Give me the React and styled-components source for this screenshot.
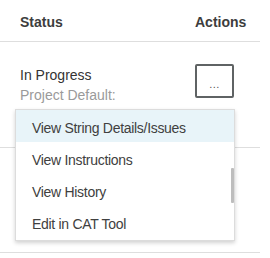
import React from "react";
import styled, { createGlobalStyle } from "styled-components";

const Global = createGlobalStyle`
  html, body { margin: 0; padding: 0; background: #fff; }
  body { font-family: "Liberation Sans", Arial, sans-serif; }
`;

const Table = styled.div`
  position: relative;
  width: 260px;
`;

const Row = styled.div`
  display: grid;
  grid-template-columns: 175px 65px;
  padding-left: 20px;
  height: ${(p) => p.$h}px;
  border-bottom: 1px solid #dedede;
  box-sizing: border-box;
  align-items: ${(p) => (p.$head ? "center" : "start")};
`;

const HeadCell = styled.div`
  font-weight: bold;
  font-size: 14px;
  color: #3d3d3d;
  padding-top: 2px;
`;

const Cell = styled.div`
  display: flex;
  flex-direction: column;
  padding-top: ${(p) => p.$pt}px;
`;

const StatusText = styled.div`
  font-size: 14px;
  line-height: 20px;
  color: ${(p) => (p.$muted ? "#9a9a9a" : "#333")};
`;

const MoreButton = styled.button`
  width: 39px;
  height: 34px;
  box-sizing: border-box;
  border: 2px solid #5f6364;
  border-radius: 2px;
  background: #fff;
  color: #555;
  font-size: 11px;
  line-height: 1;
  padding: 6px 0 0;
  font-family: inherit;
  letter-spacing: 0.5px;
`;

const Menu = styled.ul`
  position: absolute;
  left: 15px;
  top: 109px;
  width: 220px;
  margin: 0;
  padding: 0 0 2px;
  list-style: none;
  box-sizing: border-box;
  background: #fff;
  border: 1px solid #dcdcdc;
  box-shadow: 0 2px 4px rgba(0, 0, 0, 0.18);
`;

const Item = styled.li`
  height: 32px;
  display: flex;
  align-items: center;
  padding: 3px 0 0 16px;
  box-sizing: border-box;
  font-size: 14px;
  letter-spacing: -0.3px;
  color: #404040;
  background: ${(p) => (p.$active ? "#e8f4f9" : "transparent")};
`;

const Thumb = styled.div`
  position: absolute;
  right: 0;
  top: 58px;
  width: 3px;
  height: 35px;
  background: #bdbdbd;
  border-radius: 1px;
`;

export default function App() {
  return (
    <>
      <Global />
      <Table>
        <Row $head $h={42}>
          <HeadCell>Status</HeadCell>
          <HeadCell>Actions</HeadCell>
        </Row>
        <Row $h={106}>
          <Cell $pt={23}>
            <StatusText>In Progress</StatusText>
            <StatusText $muted>Project Default:</StatusText>
          </Cell>
          <Cell $pt={22}>
            <MoreButton>...</MoreButton>
          </Cell>
        </Row>
        <Row $h={105} />
        <Menu>
          <Item $active>View String Details/Issues</Item>
          <Item>View Instructions</Item>
          <Item>View History</Item>
          <Item>Edit in CAT Tool</Item>
          <Thumb />
        </Menu>
      </Table>
    </>
  );
}
